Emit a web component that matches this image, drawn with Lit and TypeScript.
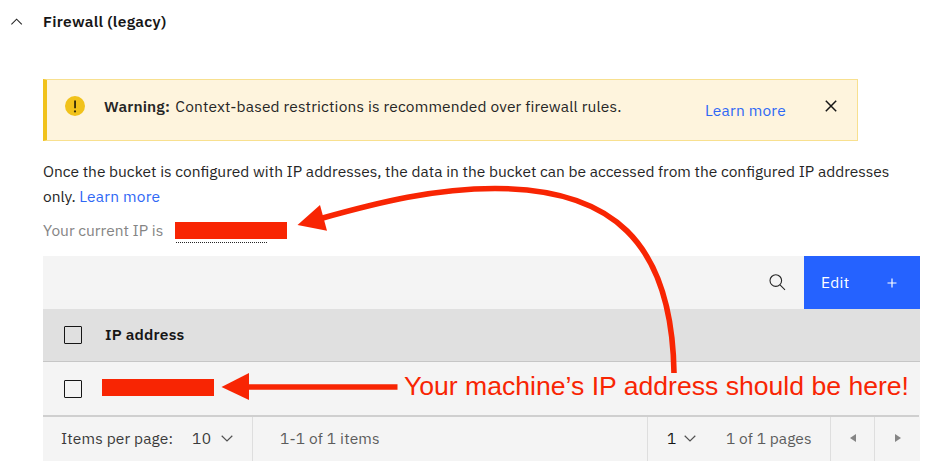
import { LitElement, html, css } from "lit";
import { customElement } from "lit/decorators.js";

@customElement("app-root")
export class AppRoot extends LitElement {
  static styles = css`
    :host { display: block; position: relative; width: 932px; height: 476px; overflow: hidden; background: #fff; color: #262626; font: 15.5px/20px "IBM Plex Sans", Roboto, sans-serif; letter-spacing: 0.12px; white-space: nowrap; }
    * { box-sizing: border-box; }
    svg { display: block; flex: none; }
    .head { display: flex; align-items: center; height: 43px; padding-left: 11px; }
    .head h2 { margin: -2px 0 0 20px; font-size: 15.5px; font-weight: 600; color: #161616; letter-spacing: 0.3px; }
    .content { margin-left: 43px; width: 877px; padding-top: 36px; }
    .warning { display: flex; width: 815px; height: 62px; background: #fef4dd; border: 1px solid #f8e08f; border-left: 4px solid #f1c21b; }
    .warning .mark { margin: 16px 0 0 18px; }
    .warning p { margin: 16px 0 0 19px; width: 601px; letter-spacing: 0.16px; }
    .warning b { margin-right: 1.5px; font-weight: 600; letter-spacing: 0.13px; }
    .link { color: #2f68f5; letter-spacing: 0.2px; }
    .warning .link { margin-top: 20px; width: 120px; }
    .warning .close { margin-top: 20px; }
    .info { margin: 18px 0 0; line-height: 25px; letter-spacing: 0; }
    .current { display: flex; height: 20px; margin-top: 12px; color: #858585; }
    .current span { width: 132px; margin-top: -1px; letter-spacing: 0; }
    .current .ip { width: 91px; height: 22px; border-bottom: 1px dotted #262626; margin-left: 1px; }
    .redact { width: 112px; height: 17px; background: #f82503; }
    .current .redact { margin-left: -1px; margin-top: 1px; }
    .table { margin-top: 15px; background: #f4f4f4; }
    .toolbar { display: flex; height: 53px; align-items: center; justify-content: flex-end; }
    .edit { display: flex; align-items: center; width: 116px; height: 53px; margin-left: 18px; padding: 0 23px 0 17px; justify-content: space-between; background: #2562ff; color: #fff; letter-spacing: 0.3px; }
    .edit span { margin-top: -1px; }
    .row { display: flex; align-items: center; height: 53px; padding-left: 21px; }
    .row.header { background: #e0e0e0; border-bottom: 1px solid #c6c6c6; font-weight: 600; color: #161616; }
    .box { width: 18px; height: 18px; border: 1px solid #161616; border-radius: 1px; }
    .row .title { margin: -2px 0 0 23px; letter-spacing: 0.2px; }
    .row .redact { margin: -3px 0 0 20px; }
    .pager { display: flex; height: 46px; width: 876px; border-top: 2px solid #cfcfcf; background: #f4f4f4; color: #5c5c5c; }
    .cell { display: flex; align-items: center; height: 44px; border-right: 1px solid #dedede; padding-bottom: 2px; }
    .cell:last-child { border-right: 0; }
    .dark { color: #3a3a3a; }
    .size { width: 210px; padding-left: 18px; }
    .size .label { width: 131px; letter-spacing: 0.14px; }
    .size .value { width: 29px; letter-spacing: 0.33px; }
    .range { width: 395px; padding-left: 27px; letter-spacing: 0.16px; }
    .pages { width: 183px; padding-left: 19px; }
    .pages .value { width: 17px; color: #161616; }
    .pages .total { margin-left: 30px; letter-spacing: 0.08px; }
    .prev { width: 44px; padding-left: 19px; }
    .next { width: 44px; padding-left: 20px; }
    .notes { position: absolute; left: 0; top: 0; }
    .note { font: 26px "Liberation Sans", Helvetica, Arial, sans-serif; letter-spacing: 0; fill: #f82503; }
  `;

  private down() {
    return html`<svg width="12" height="7" viewBox="0 0 12 7" fill="none" stroke="#525252" stroke-width="1.2"><path d="M.7 .8 6 6 11.3 .8" /></svg>`;
  }

  render() {
    return html`
      <header class="head">
        <svg width="12" height="7" viewBox="0 0 12 7" fill="none" stroke="#262626" stroke-width="1.1"><path d="M.4 6.4 5.6 1.2 10.8 6.4" /></svg>
        <h2>Firewall (legacy)</h2>
      </header>
      <main class="content">
        <section class="warning">
          <svg class="mark" width="20" height="20" viewBox="0 0 20 20"><circle cx="10" cy="10" r="10" fill="#f1c21b" /><path d="M9.1 4.5h1.9v7.7H9.1z" fill="#3b3108" /><circle cx="10" cy="15.4" r="1.1" fill="#3b3108" /></svg>
          <p><b>Warning:</b> <span class="message">Context-based restrictions is recommended over firewall rules.</span></p>
          <span class="link">Learn more</span>
          <svg class="close" width="12" height="12" viewBox="0 0 12 12" stroke="#161616" stroke-width="1.5"><path d="M.8 .8 11.2 11.2M11.2 .8 .8 11.2" /></svg>
        </section>
        <p class="info">Once the bucket is configured with IP addresses, the data in the bucket can be accessed from the configured IP addresses<br />only. <span class="link">Learn more</span></p>
        <div class="current"><span>Your current IP is</span><div class="ip"><div class="redact"></div></div></div>
        <section class="table">
          <div class="toolbar">
            <svg width="17" height="17" viewBox="0 0 17 17" fill="none" stroke="#262626" stroke-width="1.1"><circle cx="6.8" cy="6.6" r="5.8" /><path d="M11 10.8 16 15.8" /></svg>
            <div class="edit"><span>Edit</span><svg width="10" height="10" viewBox="0 0 10 10" stroke="#fff" stroke-width="1.2"><path d="M5 .5v9M.5 5h9" /></svg></div>
          </div>
          <div class="row header"><div class="box"></div><span class="title">IP address</span></div>
          <div class="row"><div class="box"></div><div class="redact"></div></div>
          <footer class="pager">
            <div class="cell size dark"><span class="label">Items per page:</span><span class="value">10</span>${this.down()}</div>
            <div class="cell range">1-1 of 1 items</div>
            <div class="cell pages"><span class="value dark">1</span>${this.down()}<span class="total">1 of 1 pages</span></div>
            <div class="cell prev"><svg width="6" height="8" viewBox="0 0 6 8"><path d="M6 0v8L0 4z" fill="#858585" /></svg></div>
            <div class="cell next"><svg width="6" height="8" viewBox="0 0 6 8"><path d="M0 0v8l6-4z" fill="#858585" /></svg></div>
          </footer>
        </section>
      </main>
      <svg class="notes" width="932" height="476" viewBox="0 0 932 476">
        <path d="M674 373C672 240 610 188.5 495 188.5C435 188.5 380 202 321 218.5" fill="none" stroke="#f82503" stroke-width="5.6" />
        <path d="M297.5 225 320 205 327 230.7z" fill="#f82503" />
        <path d="M397.5 387H245" stroke="#f82503" stroke-width="5.6" />
        <path d="M221.5 387 249 373v27z" fill="#f82503" />
        <text class="note" x="404" y="395.2" textLength="505" lengthAdjust="spacingAndGlyphs">Your machine’s IP address should be here!</text>
      </svg>
    `;
  }
}
